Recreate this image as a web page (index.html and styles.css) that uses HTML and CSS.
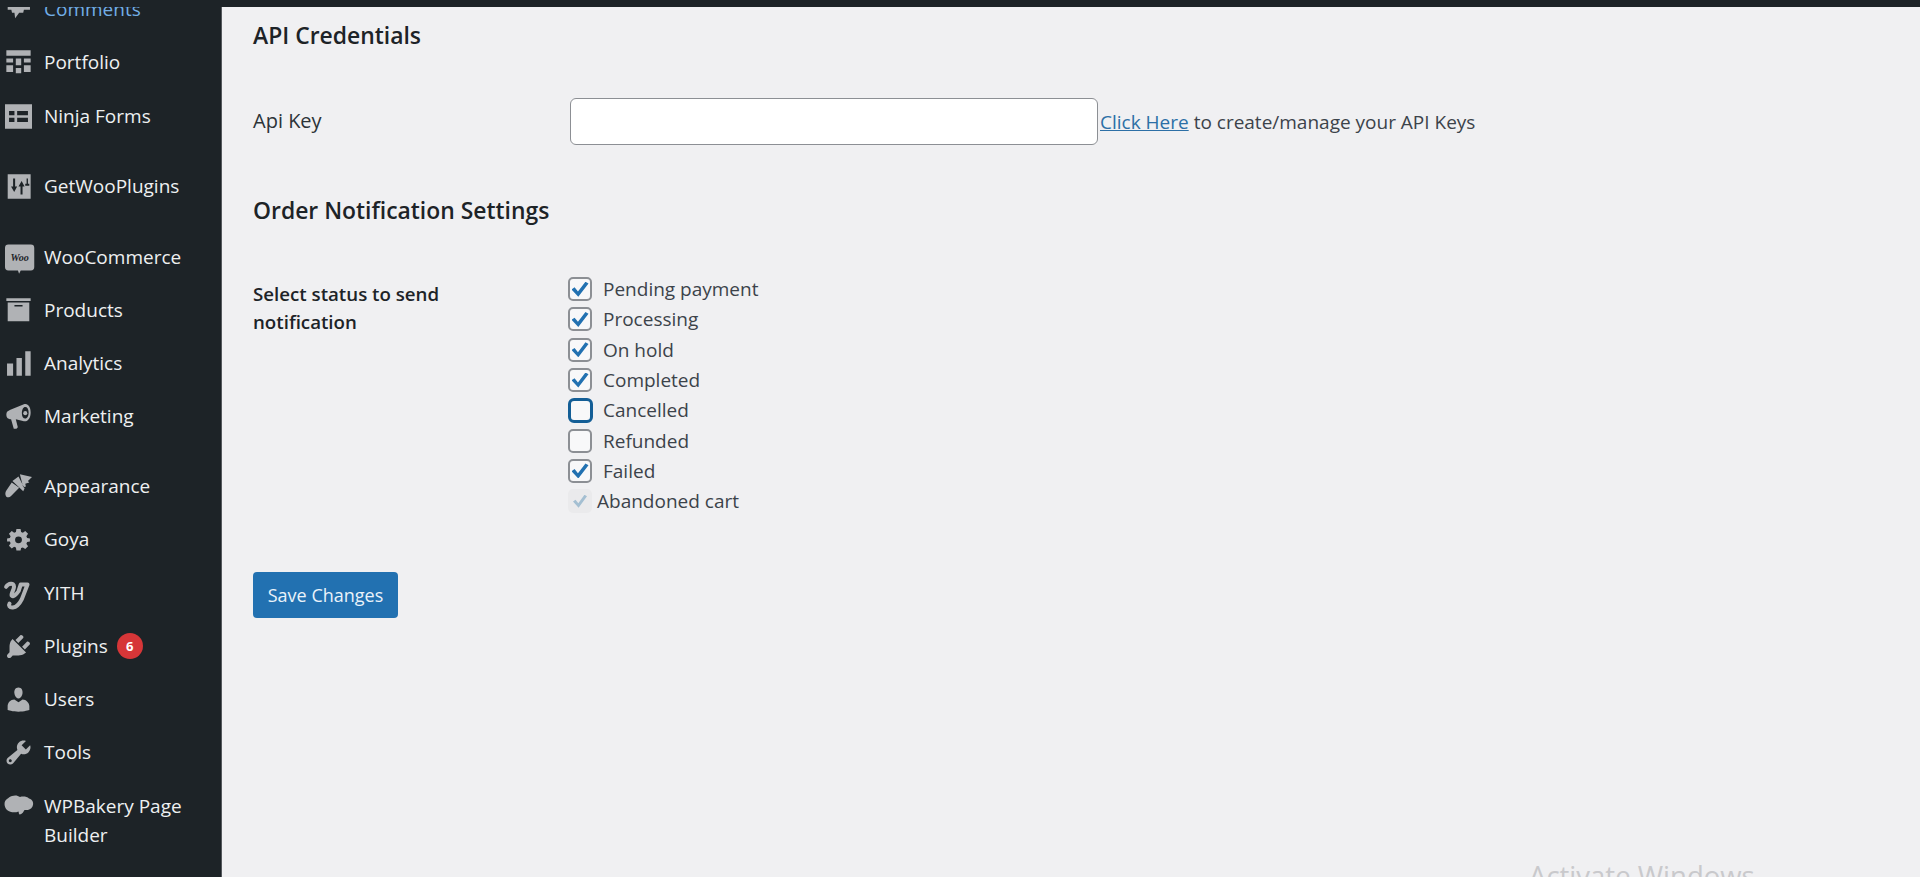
FILE: index.html
```html
<!DOCTYPE html>
<html lang="en">
<head>
<meta charset="utf-8">
<title>Order Notification Settings</title>
<link rel="stylesheet" href="styles.css">
</head>
<body>
<div class="topbar"></div>
<div class="shell">
  <nav class="sidebar">
    <ul class="menu">
      <li class="item current"><svg class="icon" viewBox="0 0 20 20"><path d="M2 3h16.500v7.200H14l-.5 2.200h-3l-3 4-.5-4H5.200l-.5-2.200H2z"/></svg><span>Comments</span></li>
      <li class="item"><svg class="icon" viewBox="0 0 20 20"><path d="M1 1h18v4H1zM1 7h5v3H1zM8 7h4v5H8zM14 7h5v3h-5zM1 12h5v5H1zM8 14h4v4H8zM14 12h5v5h-5z"/></svg><span>Portfolio</span></li>
      <li class="item sep-after"><svg class="icon" viewBox="0 0 20 20"><path fill-rule="evenodd" d="M0 1h20v18H0zM3 6v3h4V6zM9 6v3h8V6zM3 11v3h4v-3zM9 11v3h8v-3z"/></svg><span>Ninja Forms</span></li>
      <li class="item sep-after sep-wide"><svg class="icon" viewBox="0 0 20 20"><path fill-rule="evenodd" d="M2 1h17v18H2zM6 4v6H4.500l2.300 4 2.200-4H7.500V4zM13 16v-6h1.500l-2.200-4-2.300 4h1.500v6zM15 8v1.500h3V8h-1V4h-1v4z"/></svg><span>GetWooPlugins</span></li>
      <li class="item"><svg class="icon" viewBox="0 0 24 24"><path d="M3 .500h20a3 3 0 0 1 3 3v17a3 3 0 0 1-3 3h-9l-1.500 3-1-3H3a3 3 0 0 1-3-3v-17a3 3 0 0 1 3-3z"/><text class="woo-mark" x="13" y="15.500" text-anchor="middle">Woo</text></svg><span>WooCommerce</span></li>
      <li class="item"><svg class="icon" viewBox="0 0 20 20"><path d="M19 1v2H1V1zM2 4h16v14H2zm11 3V6H7v1z" fill-rule="evenodd"/></svg><span>Products</span></li>
      <li class="item item-short"><svg class="icon" viewBox="0 0 20 20"><path d="M19 19V1h-4v18zM12.500 19V6h-4v13zM6 19V10H1.500v9z"/></svg><span>Analytics</span></li>
      <li class="item sep-after"><svg class="icon" viewBox="0 0 20 20"><path fill-rule="evenodd" d="M14 1c3-1 5 2 5 6s-2 7-5 6.500L8 12l1.500 6-1 1H6.500L4.500 12C2 12 1 10.500 1 8.500S2 6 4 5zM15 3c-1.500 0-2.500 2-2.500 4.500s1 4 2.500 4 2.500-2 2.500-4.500S16.500 3 15 3z"/><circle cx="15" cy="7.500" r="1.500"/></svg><span>Marketing</span></li>
      <li class="item"><svg class="icon" viewBox="0 0 20 20"><path d="M11 1l9 2-3 3 1 1-3 1 .500 2-2 .500zM10 2.500L5.500 6l8 7.500 1-2zM5 7L1 13c-1 1.500-1 3.500 0 4.500s2.500.500 3.500-.500l6-6z"/></svg><span>Appearance</span></li>
      <li class="item"><svg class="icon" viewBox="-3 -3 26 26"><path fill-rule="evenodd" d="M8 0h4l.500 2.700 1.700.7 2.300-1.600 2.700 2.700-1.600 2.300.7 1.700L21 9v3l-2.700.500-.7 1.700 1.600 2.300-2.700 2.700-2.300-1.600-1.700.7L12 20.500H8l-.5-2.700-1.700-.7-2.300 1.600-2.700-2.700 1.600-2.300-.7-1.700L-1 12V9l2.700-.5.7-1.700-1.600-2.300 2.700-2.700 2.300 1.600 1.700-.7zM10 7a3.300 3.300 0 1 0 0 6.600A3.300 3.300 0 0 0 10 7z"/></svg><span>Goya</span></li>
      <li class="item"><svg class="icon yith" viewBox="0 0 24 24"><path d="M1 6c2-3 7-4 7 0 0 3-3 6-2 8 1 1.500 4-1 6-4l2-6h6l-5 13c-2 4-4 7-8 7.500-3 .300-4-2-3-3.500"/></svg><span>YITH</span></li>
      <li class="item"><svg class="icon" viewBox="1 1 18 18"><path d="M13.110 4.360L9.870 7.600 8 5.730l3.240-3.240c.35-.34 1.050-.2 1.560.32.52.51.66 1.210.31 1.550zm-8 1.770l.91-1.120 9.010 9.010-1.190.84c-.71.71-2.630 1.160-3.820 1.160H6.140L4.900 17.260c-.59.59-1.540.59-2.120 0-.59-.58-.59-1.530 0-2.120l1.240-1.240v-3.880c0-1.130.4-3.190 1.090-3.890zm7.260 3.970l3.240-3.240c.34-.35 1.040-.21 1.550.31.52.51.66 1.210.31 1.550l-3.240 3.250z"/></svg><span>Plugins</span><b class="badge">6</b></li>
      <li class="item"><svg class="icon" viewBox="1 1 18 18"><path d="M10 9.250c-2.270 0-2.730-3.440-2.730-3.440C7 4.020 7.820 2 9.970 2c2.160 0 2.980 2.020 2.710 3.810 0 0-.41 3.440-2.680 3.440zm0 2.570L12.720 10c2.390 0 4.520 2.330 4.520 4.530v2.490s-3.650 1.130-7.240 1.130c-3.650 0-7.240-1.130-7.240-1.130v-2.490c0-2.250 1.940-4.480 4.470-4.480z"/></svg><span>Users</span></li>
      <li class="item"><svg class="icon" viewBox="1 1 18 18"><path d="M16.680 9.770c-1.340 1.340-3.300 1.670-4.950.99l-5.410 6.520c-.99.99-2.590.99-3.580 0s-.99-2.590 0-3.570l6.520-5.420c-.68-1.650-.35-3.610.99-4.950 1.280-1.280 3.120-1.620 4.720-1.060l-2.890 2.890 2.820 2.820 2.860-2.870c.53 1.580.18 3.390-1.080 4.670zM3.810 16.210c.4.390 1.040.39 1.430 0 .4-.4.4-1.040 0-1.430-.39-.4-1.030-.4-1.430 0-.39.39-.39 1.030 0 1.430z"/></svg><span>Tools</span></li>
      <li class="item"><svg class="icon wide" viewBox="0 0 30 24"><path d="M8 1c3-1 6-.500 8 1 3-1 7-.500 9 1.500 4 1 5 5 3.500 8-1.500 3-5 4-8 3.500-1 1.500-2 4-4.500 4.500-1.500 0-1-2-1.500-3C11 18 6 17.500 3 15 0 12-.500 6 3 4c1.500-1 3-2.500 5-3z"/></svg><span>WPBakery Page<br>Builder</span></li>
    </ul>
  </nav>
  <main class="page">
    <h2 class="heading first">API Credentials</h2>
    <div class="field-row">
      <label class="field-label" for="api-key">Api Key</label>
      <input class="text-input" id="api-key" type="text">
      <span class="hint"><a href="#">Click Here</a> to create/manage your API Keys</span>
    </div>
    <h2 class="heading second">Order Notification Settings</h2>
    <div class="status-row">
      <div class="status-label">Select status to send notification</div>
      <div class="status-list">
        <label class="check"><input type="checkbox" checked><span>Pending payment</span></label>
        <label class="check"><input type="checkbox" checked><span>Processing</span></label>
        <label class="check"><input type="checkbox" checked><span>On hold</span></label>
        <label class="check"><input type="checkbox" checked><span>Completed</span></label>
        <label class="check"><input class="focused" type="checkbox"><span>Cancelled</span></label>
        <label class="check"><input type="checkbox"><span>Refunded</span></label>
        <label class="check"><input type="checkbox" checked><span>Failed</span></label>
        <label class="check off"><input type="checkbox" checked disabled><span>Abandoned cart</span></label>
      </div>
    </div>
    <button class="save" type="button">Save Changes</button>
  </main>
</div>
<div class="watermark">Activate Windows</div>
</body>
</html>
```
FILE: styles.css
```css
* { box-sizing: border-box; }
html, body { margin: 0; height: 877px; overflow: hidden; }
body { background: #f0f0f2; color: #3c434a; font-family: "Open Sans", "Noto Sans", sans-serif; font-size: 19px; position: relative; }

.topbar { height: 7px; background: #1d2327; }
.shell { display: flex; height: 870px; overflow: hidden; }

.sidebar { width: 222px; flex: none; background: #1d2327; border-right: 1px solid #55595d; overflow: hidden; }
.menu { list-style: none; margin: -24px 0 0; padding: 0; }
.item { display: flex; align-items: center; height: 53.25px; padding-left: 5px; color: #eef0f1; font-size: 19px; line-height: 29px; }
.item.item-short { height: 52.25px; }
.item.sep-after { margin-bottom: 17px; }
.item.sep-wide { margin-bottom: 18px; }
.item.current { color: #72aee6; }
.item:last-child { align-items: flex-start; height: auto; padding-top: 12px; }
.item:last-child .icon { margin-top: 3px; }
.icon { width: 27px; height: 27px; flex: none; margin-right: 12px; fill: #b0b2b5; overflow: visible; }
.icon.wide { width: 30px; height: 24px; margin-left: -1px; margin-right: 10px; }
.icon.yith { fill: none; stroke: #b0b2b5; stroke-width: 3.600; stroke-linecap: round; stroke-linejoin: round; }
.woo-mark { fill: #1d2327; font-family: "Liberation Serif", serif; font-style: italic; font-weight: 700; font-size: 9px; }
.badge { display: flex; align-items: center; justify-content: center; width: 26px; height: 26px; margin-left: 9px; border-radius: 50%; background: #d63638; color: #fff; font-size: 13px; font-weight: 700; }

.page { flex: 1; min-width: 0; padding-left: 31px; }

.heading { margin: 0; color: #1d2327; font-size: 22.900px; font-weight: 600; line-height: 28px; }
.heading.first { margin-top: 15px; }
.heading.second { margin-top: 52px; }

.field-row { display: flex; align-items: center; margin-top: 48px; }
.field-label { width: 317px; padding-bottom: 2px; color: #2c3338; font-size: 20px; font-weight: 500; }
.text-input { width: 528px; height: 47px; background: #fff; border: 1.500px solid #8c8f94; border-radius: 6px; }
.hint { margin-left: 2px; font-size: 19px; padding-top: 1px; }
.hint a { color: #2c6fa6; }

.status-row { display: flex; margin-top: 49px; }
.status-label { width: 315px; padding: 6px 60px 0 0; color: #1d2327; font-size: 18.700px; font-weight: 600; line-height: 28px; }
.status-list { display: flex; flex-direction: column; }
.check { display: flex; align-items: center; gap: 11px; height: 30.300px; font-size: 19px; }
.check input { appearance: none; display: flex; align-items: center; justify-content: center; width: 24px; height: 24px; margin: 0; background: #f8f8f9; border: 2px solid #8c8f94; border-radius: 5px; flex: none; }
.check input:checked::before { content: ""; width: 17px; height: 15px; background: #2271b1; clip-path: polygon(0 52%, 18% 38%, 38% 66%, 82% 0, 100% 12%, 40% 100%); }
.check input.focused { width: 25px; height: 25px; margin-right: -1px; border: 3px solid #135e96; border-radius: 6px; }
.check.off { gap: 5px; }
.check.off input { border-color: transparent; background: #eaeaec; }
.check.off input::before { background: #a4bfd2; width: 14px; height: 13px; }

.save { display: block; width: 145px; height: 46px; margin-top: 56px; padding: 0; background: #2271b1; border: 0; border-radius: 4px; color: #eaf3fa; font-family: inherit; font-size: 18px; }

.watermark { position: absolute; left: 1529px; top: 858px; color: #c9c9cc; font-size: 27.500px; line-height: 36px; white-space: nowrap; }
```
